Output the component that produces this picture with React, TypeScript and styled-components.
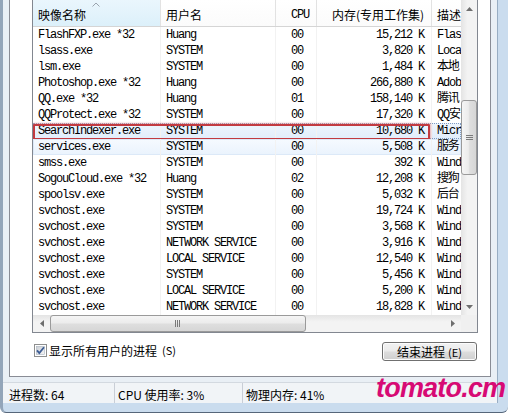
import styled, { createGlobalStyle } from "styled-components";

const GlobalStyle = createGlobalStyle`
  html, body {
    margin: 0;
    padding: 0;
    background: #ffffff;
  }
  body {
    font-family: "Noto Sans CJK SC", "Noto Sans", sans-serif;
  }
  * {
    box-sizing: border-box;
  }
`;

type Proc = [string, string, string, string, string];

// description column is narrow, only its first letters show
const processes: Proc[] = [
  ["FlashFXP.exe *32", "Huang", "00", "15,212 K", "Flas"],
  ["lsass.exe", "SYSTEM", "00", "3,820 K", "Loca"],
  ["lsm.exe", "SYSTEM", "00", "1,484 K", "本地"],
  ["Photoshop.exe *32", "Huang", "00", "266,880 K", "Adob"],
  ["QQ.exe *32", "Huang", "01", "158,140 K", "腾讯"],
  ["QQProtect.exe *32", "SYSTEM", "00", "17,320 K", "QQ安"],
  ["SearchIndexer.exe", "SYSTEM", "00", "10,680 K", "Micr"],
  ["services.exe", "SYSTEM", "00", "5,508 K", "服务"],
  ["smss.exe", "SYSTEM", "00", "392 K", "Wind"],
  ["SogouCloud.exe *32", "Huang", "02", "12,208 K", "搜狗"],
  ["spoolsv.exe", "SYSTEM", "00", "5,032 K", "后台"],
  ["svchost.exe", "SYSTEM", "00", "19,724 K", "Wind"],
  ["svchost.exe", "SYSTEM", "00", "3,568 K", "Wind"],
  ["svchost.exe", "NETWORK SERVICE", "00", "3,916 K", "Wind"],
  ["svchost.exe", "LOCAL SERVICE", "00", "12,540 K", "Wind"],
  ["svchost.exe", "SYSTEM", "00", "5,456 K", "Wind"],
  ["svchost.exe", "LOCAL SERVICE", "00", "5,200 K", "Wind"],
  ["svchost.exe", "NETWORK SERVICE", "00", "18,828 K", "Wind"],
];

const SELECTED = 6;
const HOVERED = 7;

function Arrow({ dir }: { dir: "up" | "down" | "left" | "right" }) {
  const points = {
    up: "0,4 3.5,0 7,4",
    down: "0,0 3.5,4 7,0",
    left: "4,0 0,3.5 4,7",
    right: "0,0 4,3.5 0,7",
  }[dir];
  const vertical = dir === "up" || dir === "down";
  return (
    <svg width={vertical ? 7 : 4} height={vertical ? 4 : 7} viewBox={vertical ? "0 0 7 4" : "0 0 4 7"}>
      <polygon points={points} fill="#6e6e6e" />
    </svg>
  );
}

export default function App() {
  return (
    <>
      <GlobalStyle />
      <Window>
        <Client>
          <TabPage>
            <ListView>
              <MainArea>
                <Header>
                  <HeadCell $w={128} $sorted>
                    映像名称
                    <SortMark width="8" height="5" viewBox="0 0 8 5">
                      <polyline points="0.5,4.5 4,1 7.5,4.5" fill="none" stroke="#9aa4ae" strokeWidth="1" />
                    </SortMark>
                  </HeadCell>
                  <HeadCell $w={115}>用户名</HeadCell>
                  <HeadCell $w={41} $mono $pad={15}>CPU</HeadCell>
                  <HeadCell $w={115} $right>内存(专用工作集)</HeadCell>
                  <HeadCell $w={29} $last>描述</HeadCell>
                </Header>
                <Rows>
                  {processes.map((p, i) => (
                    <Row key={i} $selected={i === SELECTED} $hover={i === HOVERED}>
                      <Cell>{p[0]}</Cell>
                      <Cell>{p[1]}</Cell>
                      <Cell $pad={15}>{p[2]}</Cell>
                      <Cell $right>{p[3]}</Cell>
                      <Cell $last>{p[4]}</Cell>
                      {i === SELECTED && <RedMark />}
                    </Row>
                  ))}
                </Rows>
              </MainArea>
              <VScroll>
                <ScrollBtn>
                  <Arrow dir="up" />
                </ScrollBtn>
                <VTrack>
                  <VThumb>
                    <svg width="7" height="6" viewBox="0 0 7 6">
                      <path d="M0 0.5H7M0 2.5H7M0 4.5H7" stroke="#7a7a7a" strokeWidth="1" />
                    </svg>
                  </VThumb>
                </VTrack>
                <ScrollBtn>
                  <Arrow dir="down" />
                </ScrollBtn>
              </VScroll>
              <HScroll>
                <ScrollBtn>
                  <Arrow dir="left" />
                </ScrollBtn>
                <HThumb>
                  <svg width="6" height="7" viewBox="0 0 6 7">
                    <path d="M0.5 0V7M2.5 0V7M4.5 0V7" stroke="#7a7a7a" strokeWidth="1" />
                  </svg>
                </HThumb>
                <HTrackRest />
                <ScrollBtn>
                  <Arrow dir="right" />
                </ScrollBtn>
              </HScroll>
              <Corner />
            </ListView>
            <Footer>
              <CheckLabel>
                <svg width="13" height="13" viewBox="0 0 13 13">
                  <defs>
                    <linearGradient id="cbg" x1="0" y1="0" x2="1" y2="1">
                      <stop offset="0" stopColor="#cbcfd5" />
                      <stop offset="1" stopColor="#f6f6f6" />
                    </linearGradient>
                  </defs>
                  <rect x="0.5" y="0.5" width="12" height="12" fill="#fff" stroke="#8e8f8f" />
                  <rect x="2.5" y="2.5" width="8" height="8" fill="url(#cbg)" stroke="#a9b3bf" strokeWidth="0.6" />
                  <path d="M3 6.3 L5.3 9 L10 3.2" fill="none" stroke="#3d5d94" strokeWidth="1.8" />
                </svg>
                显示所有用户的进程 <Mnemonic>(S)</Mnemonic>
              </CheckLabel>
              <Button>
                结束进程 <Mnemonic>(E)</Mnemonic>
              </Button>
            </Footer>
          </TabPage>
          <StatusBar>
            <StatusCell $w={112} $first>进程数: 64</StatusCell>
            <StatusCell $w={128}>CPU 使用率: 3%</StatusCell>
            <StatusCell $w={250} $last>物理内存: 41%</StatusCell>
          </StatusBar>
        </Client>
        <Watermark>tomato.cm</Watermark>
      </Window>
    </>
  );
}

const Window = styled.div`
  position: relative;
  width: 508px;
  height: 413px;
  display: flex;
  flex-direction: column;
  background: #cadcee;
  border-left: 3px solid #93a5b9;
  border-bottom: 1px solid #56667a;
  border-bottom-left-radius: 6px;
  border-bottom-right-radius: 6px;
  overflow: hidden;
`;

const Client = styled.div`
  width: 495px;
  height: 403px;
  display: flex;
  flex-direction: column;
  background: #e9eff5;
  border-right: 1px solid #98adc3;
`;

const TabPage = styled.div`
  height: 377px;
  margin: 0 6px;
  padding: 0 12px 0 22px;
  background: #ffffff;
  border: 1px solid #898c95;
  border-top: none;
  display: flex;
  flex-direction: column;
`;

const ListView = styled.div`
  width: 446px;
  display: grid;
  grid-template-columns: 428px 16px;
  grid-template-rows: 315px 17px;
  border: 1px solid #828790;
  border-top: none;
  background: #ffffff;
`;

const MainArea = styled.div`
  display: flex;
  flex-direction: column;
  overflow: hidden;
`;

const Header = styled.div`
  height: 27px;
  display: flex;
  border-bottom: 1px solid #d5d5d5;
  background: linear-gradient(#ffffff, #fbfbfb);
`;

const HeadCell = styled.div<{
  $w: number;
  $sorted?: boolean;
  $mono?: boolean;
  $right?: boolean;
  $last?: boolean;
  $pad?: number;
}>`
  position: relative;
  flex: 0 0 ${(p) => p.$w}px;
  display: flex;
  align-items: center;
  justify-content: ${(p) => (p.$right ? "flex-end" : "flex-start")};
  padding: 3px ${(p) => (p.$right ? 7 : 0)}px 0 ${(p) => p.$pad ?? 5}px;
  border-right: ${(p) => (p.$last ? "none" : "1px solid #e2e2e2")};
  background: ${(p) => (p.$sorted ? "linear-gradient(#eaf6fd, #dcf0fa)" : "transparent")};
  font-family: ${(p) =>
    p.$mono
      ? `"Liberation Mono", "Noto Sans CJK SC", monospace`
      : `"Noto Sans CJK SC", "Noto Sans", sans-serif`};
  font-size: 12px;
  letter-spacing: ${(p) => (p.$mono ? "-1.2px" : "0")};
  color: #000;
  white-space: nowrap;
  overflow: hidden;
`;

const SortMark = styled.svg`
  position: absolute;
  top: 2px;
  left: 59px;
`;

const Rows = styled.div`
  display: flex;
  flex-direction: column;
`;

const Row = styled.div<{ $selected?: boolean; $hover?: boolean }>`
  position: relative;
  height: 16px;
  display: grid;
  grid-template-columns: 128px 115px 41px 115px 29px;
  align-items: center;
  font-family: "Liberation Mono", "Noto Sans CJK SC", monospace;
  font-size: 12px;
  letter-spacing: -1.2px;
  color: #000;
  background: ${(p) =>
    p.$selected
      ? "linear-gradient(#eef5fd, #e1edfb)"
      : p.$hover
      ? "linear-gradient(#f6faff, #eaf3fd)"
      : "transparent"};
  outline: ${(p) => (p.$selected ? "1px dotted #7f9cc4" : "none")};
  outline-offset: -1px;
  box-shadow: ${(p) => (p.$hover ? "inset 0 0 0 1px #dce9f8" : "none")};
`;

const Cell = styled.div<{ $right?: boolean; $last?: boolean; $pad?: number }>`
  height: 16px;
  line-height: 16px;
  padding: 0 ${(p) => (p.$right ? 7 : 0)}px 0 ${(p) => (p.$right ? 0 : p.$pad ?? 5)}px;
  text-align: ${(p) => (p.$right ? "right" : "left")};
  white-space: nowrap;
  overflow: hidden;
  border-right: ${(p) => (p.$last ? "none" : "1px solid #f2f2f2")};
`;

const RedMark = styled.div`
  position: absolute;
  left: 0;
  top: 1px;
  width: 397px;
  height: 16px;
  border: 2px solid #c23a40;
  border-radius: 1px;
  box-shadow: 0 0 2px 1px rgba(232, 130, 130, 0.55);
  pointer-events: none;
`;

const VScroll = styled.div`
  display: flex;
  flex-direction: column;
  background: linear-gradient(to right, #e4e4e4, #f3f3f3 40%, #f3f3f3);
`;

const ScrollBtn = styled.div`
  flex: 0 0 17px;
  display: flex;
  align-items: center;
  justify-content: center;
`;

const VTrack = styled.div`
  flex: 1;
  display: flex;
  flex-direction: column;
`;

const VThumb = styled.div`
  margin-top: 83px;
  height: 75px;
  border: 1px solid #9a9a9a;
  border-radius: 3px;
  background: linear-gradient(to right, #f5f5f5, #ececec 45%, #dedede 55%, #d6d6d6);
  display: flex;
  align-items: center;
  justify-content: center;
`;

const HScroll = styled.div`
  display: flex;
  background: linear-gradient(#e4e4e4, #f3f3f3 40%, #f3f3f3);
`;

const HThumb = styled.div`
  width: 256px;
  border: 1px solid #9a9a9a;
  border-radius: 3px;
  background: linear-gradient(#f5f5f5, #ececec 45%, #dedede 55%, #d6d6d6);
  display: flex;
  align-items: center;
  justify-content: center;
`;

const HTrackRest = styled.div`
  flex: 1;
`;

const Corner = styled.div`
  background: #f0f0f0;
`;

const Footer = styled.div`
  display: flex;
  justify-content: space-between;
  align-items: flex-start;
  padding: 9px 1px 0 2px;
`;

const CheckLabel = styled.label`
  display: flex;
  align-items: center;
  gap: 2px;
  height: 16px;
  font-size: 12px;
  color: #000;
  white-space: nowrap;
`;

const Mnemonic = styled.span`
  font-size: 11px;
  margin-left: 3px;
`;

const Button = styled.div`
  width: 95px;
  height: 19px;
  display: flex;
  align-items: center;
  justify-content: center;
  border: 1px solid #707070;
  border-radius: 3px;
  background: linear-gradient(#f2f2f2, #ebebeb 48%, #dddddd 52%, #cfcfcf);
  box-shadow: inset 0 0 0 1px #fcfcfc;
  font-size: 12px;
  color: #000;
  white-space: nowrap;
`;

const StatusBar = styled.div`
  margin-top: 5px;
  height: 21px;
  display: flex;
  border-top: 1px solid #d3d9e0;
  background: #f1f4f7;
`;

const StatusCell = styled.div<{ $w: number; $first?: boolean; $last?: boolean }>`
  flex: 0 0 ${(p) => p.$w}px;
  display: flex;
  align-items: center;
  padding: 2px 0 0 ${(p) => (p.$first ? 6 : 3)}px;
  border-right: ${(p) => (p.$last ? "none" : "1px solid #c9ced6")};
  font-size: 12px;
  color: #000;
  white-space: nowrap;
`;

const Watermark = styled.div`
  position: absolute;
  left: 373px;
  top: 375px;
  font-family: "Liberation Sans", Arial, sans-serif;
  font-weight: bold;
  font-style: italic;
  font-size: 27px;
  line-height: 26px;
  letter-spacing: -0.8px;
  color: #d70a74;
`;
